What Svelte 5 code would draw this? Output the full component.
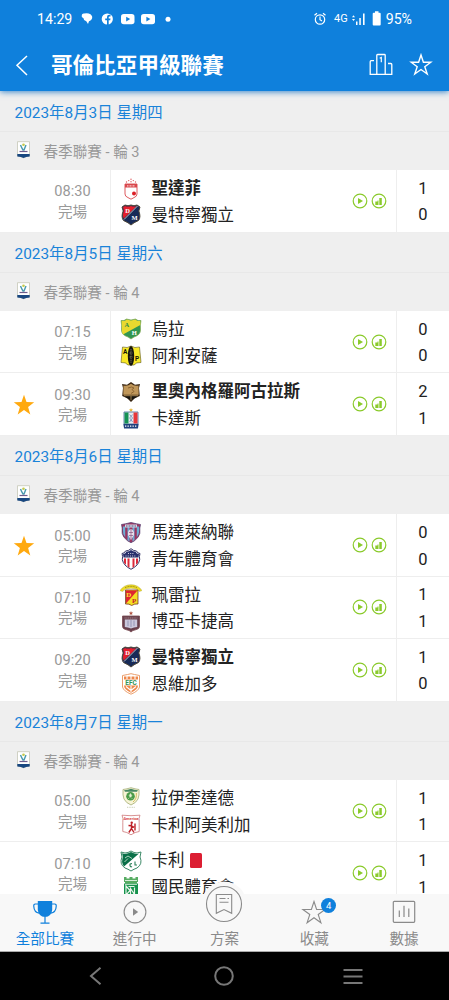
<script lang="ts">
	type Team = { name: string; crest: string; score: number; won?: boolean; red?: boolean };
	type Match = { time: string; fav?: boolean; teams: Team[] };

	const days: { date: string; round: number; matches: Match[] }[] = [
		{
			date: '2023年8月3日 星期四',
			round: 3,
			matches: [
				{
					time: '08:30',
					teams: [
						{ name: '聖達菲', crest: 'santafe', score: 1, won: true },
						{ name: '曼特寧獨立', crest: 'dim', score: 0 }
					]
				}
			]
		},
		{
			date: '2023年8月5日 星期六',
			round: 4,
			matches: [
				{
					time: '07:15',
					teams: [
						{ name: '烏拉', crest: 'huila', score: 0 },
						{ name: '阿利安薩', crest: 'alianza', score: 0 }
					]
				},
				{
					time: '09:30',
					fav: true,
					teams: [
						{ name: '里奧內格羅阿古拉斯', crest: 'aguilas', score: 2, won: true },
						{ name: '卡達斯', crest: 'caldas', score: 1 }
					]
				}
			]
		},
		{
			date: '2023年8月6日 星期日',
			round: 4,
			matches: [
				{
					time: '05:00',
					fav: true,
					teams: [
						{ name: '馬達萊納聯', crest: 'magdalena', score: 0 },
						{ name: '青年體育會', crest: 'junior', score: 0 }
					]
				},
				{
					time: '07:10',
					teams: [
						{ name: '珮雷拉', crest: 'pereira', score: 1 },
						{ name: '博亞卡捷高', crest: 'boyaca', score: 1 }
					]
				},
				{
					time: '09:20',
					teams: [
						{ name: '曼特寧獨立', crest: 'dim', score: 1, won: true },
						{ name: '恩維加多', crest: 'envigado', score: 0 }
					]
				}
			]
		},
		{
			date: '2023年8月7日 星期一',
			round: 4,
			matches: [
				{
					time: '05:00',
					teams: [
						{ name: '拉伊奎達德', crest: 'equidad', score: 1 },
						{ name: '卡利阿美利加', crest: 'america', score: 1 }
					]
				},
				{
					time: '07:10',
					teams: [
						{ name: '卡利', crest: 'cali', score: 1, red: true },
						{ name: '國民體育會', crest: 'nacional', score: 1 }
					]
				}
			]
		}
	];

	const tabs = [
		{ id: 'all', label: '全部比賽' },
		{ id: 'live', label: '進行中' },
		{ id: 'tips', label: '方案' },
		{ id: 'saved', label: '收藏' },
		{ id: 'stats', label: '數據' }
	];
	let active = $state('all');
</script>

{#snippet crest(id: string)}
	<svg viewBox="0 0 22 22" width="22" height="22">
		{#if id === 'santafe'}
			<g fill="#df5a5e">
				<circle cx="11" cy="1.2" r=".7" /><circle cx="8.7" cy="2.6" r=".7" /><circle cx="13.3" cy="2.6" r=".7" />
				<circle cx="6.5" cy="4" r=".7" /><circle cx="11" cy="3.8" r=".7" /><circle cx="15.5" cy="4" r=".7" />
			</g>
			<path d="M5 6h12v10q0 2.5-3 3.6l-3 1.6-3-1.6q-3-1.1-3-3.6z" fill="#fff" stroke="#d9474c" stroke-width=".9" />
			<path d="M5 6h12v3.5H5z" fill="#d9474c" />
			<path d="M7 7.8h8" stroke="#f6c8c8" stroke-width="1.2" stroke-dasharray="1 .5" />
			<circle cx="14" cy="15.6" r="2" fill="#dc1f26" />
		{:else if id === 'dim'}
			<path d="M2 3l3-2q3 1.5 6 0 3 1.5 6 0l3 2-1.2 4q2.4 6-.3 9.5l-4.5 2.3L11 21l-3-2.2-4.5-2.3Q.8 13 3.2 7z" fill="#172a57" stroke="#4b4437" stroke-width="1" />
			<path d="M3 3.3l2-1.4q3 1.3 6 0 3 1.3 5.7.1L3.7 14.500Q2 11 4 7z" fill="#e5202d" />
			<path d="M17.5 2L4 15.5" stroke="#e9e3d6" stroke-width=".8" />
			<text x="5.2" y="8.6" class="serif" font-size="6.5" fill="#fff">D</text>
			<text x="11.5" y="16" class="serif" font-size="6.5" fill="#fff">M</text>
		{:else if id === 'huila'}
			<path d="M1 2.5h3L6.5 1 11 2l4.5-1L18 2.5h3Q20 7 20.5 12q0 5-6.500 7l-3 2-3-2Q1.500 17 1.500 12 2 7 1 2.500z" fill="#319651" stroke="#81a852" stroke-width=".7" />
			<path d="M1.6 3h3l2-1.4L11 2.600l4.400-1L17.600 3h2.700v4L3 16.500Q1.500 14 2 10z" fill="#e9d92f" />
			<text x="4.5" y="8.8" class="serif" font-size="6.5" fill="#2f8c49">A</text>
			<text x="11.8" y="17" class="serif" font-size="6.5" fill="#fff">H</text>
		{:else if id === 'alianza'}
			<path d="M2.5 2q5 1.5 8.5-1 3.5 2.5 8.5 1l1.5 15.5q-5-.5-7 2.5H8q-2-3-7-2.5z" fill="#f8e827" stroke="#5c551a" stroke-width=".6" />
			<ellipse cx="11" cy="11" rx="3.2" ry="10" fill="#16150f" />
			<path d="M11 4v14M9.5 8h3M9.5 12h3" stroke="#8c8872" stroke-width=".8" stroke-dasharray="1.5 .7" />
			<text x="3" y="8.5" font-size="6.5" font-weight="700" fill="#171505">A</text>
			<text x="15" y="16" font-size="6.5" font-weight="700" fill="#171505">P</text>
		{:else if id === 'aguilas'}
			<path d="M2 3l5 .8L11 1l4 2.800L20 3l-1 4 .8 8-5.300 2.500L11 21l-3.500-3.500L2.200 15 3 7z" fill="#3d2915" />
			<path d="M3.5 4.5q4.5.8 7.5-1.7 3 2.5 7.5 1.7l.2 9.300H3.300z" fill="#c0975a" />
			<path d="M8 7q4-2 6 0l-2 1.500 2 2-3 2" fill="none" stroke="#8c6432" stroke-width="1" />
			<path d="M4 15l7-1 7 1-7 4.500z" fill="#171510" />
			<path d="M4 14.700h14M11 15v4" stroke="#c29a59" stroke-width=".8" />
		{:else if id === 'caldas'}
			<path d="M11 0l.6 1.300 1.400.1-1 1 .3 1.400-1.300-.7-1.300.7.3-1.400-1-1 1.400-.1z" fill="#e8b93b" />
			<path d="M4 4h14v12H4z" fill="#e8ecf1" stroke="#42649a" stroke-width=".8" />
			<path d="M4.5 4.5h4v11h-4z" fill="#159255" /><path d="M13.5 4.5h4v11h-4z" fill="#e8373a" />
			<path d="M9.600 6.500q3 2 0 3.500 3 1.500 0 4m3-7.500q-3 2 0 3.500-3 1.500 0 4" stroke="#577ba9" fill="none" stroke-width=".7" />
			<path d="M3.300 16h15.400l-.8 4.500H4.100z" fill="#21427d" />
			<path d="M5 18.200h12" stroke="#fff" stroke-width="1.2" stroke-dasharray="1.3 1.2" />
		{:else if id === 'magdalena'}
			<path d="M1.500 2.500l4-.7L11 .5l5.500 1.300 4 .7-.7 3.500q1 6-2 9.500-2.800 3.500-6.800 5.200-4-1.700-6.800-5.200Q1.200 12 2.200 6z" fill="#9d3560" stroke="#594373" stroke-width=".8" />
			<path d="M3 4.500h2.200v10.800Q2.500 12 3 9zM16.800 4.500H19q1 7-2.200 10.800zM7.500 4.500h2v15l-2-1.500zM12.500 4.500h2V18l-2 1.500z" fill="#6caed5" />
			<path d="M5 2.500h12v3H5z" fill="#d5d5e5" /><path d="M6 4h10" stroke="#4e557e" stroke-dasharray="1 .5" />
			<path d="M11 7q3.500 1 3 6l-3 5-3-5q-.5-5 3-6z" fill="#e8dfeb" /><path d="M9 10.500h4M11 7v10M9 13.500h4" stroke="#8d5580" stroke-width=".7" fill="none" />
		{:else if id === 'junior'}
			<path d="M2 5.500q2.500 0 3.500-2.500 3 0 5.500-2.300Q13.500 3 16.500 3q1 2.500 3.500 2.500-1 3-.3 6-1 6-8.700 9.800Q3.300 17.500 2.300 11.500 3 8.500 2 5.500z" fill="#fff" stroke="#343467" stroke-width="1" />
			<path d="M4 10.500v4.200l2 2v-6.200zM7.500 10.500v8l2 1.200v-9.200zM12.500 10.500v9.200l2-1.200v-8zM16 10.500v6.200l2-2v-4.200z" fill="#db2a3b" />
			<path d="M3 6q2.500 0 3.300-2.200Q9 3.600 11 1.900q2 1.700 4.700 1.900Q16.500 6 19 6l-.5 3.500h-15z" fill="#29306d" />
			<path d="M5.500 8h11M8 5.500h6" stroke="#fff" stroke-width=".8" stroke-dasharray="1 1.2" />
		{:else if id === 'pereira'}
			<path d="M0 6.500Q4 .7 11 .7t11 5.800l-2.500 1Q17 4.200 11 4.200T2.500 7.500z" fill="#f0dc25" stroke="#a39b2d" stroke-width=".4" />
			<path d="M5 3.700Q11 1 17 3.700" stroke="#766c1a" stroke-width=".8" stroke-dasharray="1 .6" fill="none" />
			<path d="M5.500 6h12.500v14q-3.500-.5-6.300 1.500-2.700-2-6.200-1.500z" fill="#f4dd24" stroke="#64221b" stroke-width=".7" />
			<path d="M6 6.500h11.500L6 19.500z" fill="#df2430" />
			<text x="6.3" y="13" class="serif" font-size="7" fill="#fae632">D</text>
			<text x="12" y="19" class="serif" font-size="7" fill="#c4202b">P</text>
		{:else if id === 'boyaca'}
			<path d="M11 0l.6 1.400 1.600.1-1.200 1 .3 1.500-1.300-.8-1.300.8.3-1.500-1.200-1 1.600-.1z" fill="#b15342" />
			<path d="M2.500 5h17v10.500q0 2.500-4 3.300-3 .4-4.500 2.200-1.500-1.800-4.500-2.200-4-.8-4-3.300z" fill="#68404d" stroke="#794a51" stroke-width=".8" />
			<path d="M4.800 8.500h12.400v7.500q-3.200 0-6.200 1.500-3-1.500-6.200-1.500z" fill="#cbc8dc" />
			<path d="M8 9.500v5.500M11 9v7M14 9.500v5.500" stroke="#7f81a8" stroke-width=".7" />
			<path d="M4.500 7h13" stroke="#c3a5a5" stroke-width=".7" stroke-dasharray="1.2 .6" />
		{:else if id === 'envigado'}
			<path d="M2.500 2.500l5-1L11 .7l3.500.8 5 1v11.500q-1 4-8.500 7.200Q3.500 18 2.500 14z" fill="#fff" stroke="#e8945c" stroke-width=".9" />
			<path d="M4 3.500h14v3H4zM4 12.500h14q0 4-7 7.300-7-3.300-7-7.300z" fill="#ee8749" />
			<path d="M7 3v3M11 3v3.500M15 3v3M6 13.500l5 4 5-4M11 13v6" stroke="#fff" stroke-width="1.1" fill="none" />
			<text x="11" y="11.6" text-anchor="middle" font-size="6.5" font-weight="700" fill="#339457">EFC</text>
		{:else if id === 'equidad'}
			<path d="M3 2.500q4-.5 8-1.800 4 1.300 8 1.800.5 6-1 9.500-2 4-7 6-5-2-7-6-1.500-3.500-1-9.500z" fill="#f7f4d6" stroke="#a3ad75" stroke-width=".8" />
			<path d="M4 3.200q4-.3 7-1.500 3 1.200 7 1.500l-1 1.500H5z" fill="#488863" />
			<circle cx="10.5" cy="9.3" r="4.3" fill="#4a9b48" /><path d="M10.500 6.500l1.300 2-.8 1.500h-1l-.8-1.500zM8 12l1.500-1.500m3 1.500L11 10.500" fill="#e5efd2" stroke="#e5efd2" stroke-width=".5" />
			<path d="M13 15q4-3 3.300-9" stroke="#d2bd5d" fill="none" />
			<path d="M7 20.300h8" stroke="#bcc4a3" stroke-width=".8" stroke-dasharray="1 .7" />
		{:else if id === 'america'}
			<path d="M2 1.200q9 1 18 0-1.500 3-.8 7v9.300q-4 .4-8.200 3.300-4.200-2.900-8.200-3.300V8.200q.7-4-.8-7z" fill="#fff" stroke="#ce7779" stroke-width=".8" />
			<text x="11" y="6.2" text-anchor="middle" font-size="4" font-weight="700" fill="#d64549">America</text>
			<circle cx="11.7" cy="8.7" r="1.2" fill="#bd2128" />
			<path d="M11.500 10v4.500l2.500 4m-2.500-4l-2.700 4M8.500 11.500l3 .3 2.500 1.500M15 9.500v7" fill="none" stroke="#bd2128" stroke-width="1.4" />
		{:else if id === 'cali'}
			<path d="M1 2l4 1Q8 3 11 1q3 2 6 2l4-1-1 5q3 7-3 11-3 1-6 3-3-2-6-3-6-4-3-11z" fill="#fff" stroke="#3c8967" stroke-width="1" />
			<path d="M2 3.200l3 .7q3.500 0 6-1.800 2.500 1.800 6 1.800l2-.4L4 16.500Q.7 12 3 7z" fill="#0a7048" />
			<path d="M5 8l3-2 4 2.500M4.500 12L8 8.500" stroke="#c2e0cd" stroke-width=".9" fill="none" />
			<path d="M12 13.500q-2.500 0-2 2t2 1M15 11.500v3.500h2" stroke="#2b8159" stroke-width="1.1" fill="none" />
		{:else if id === 'nacional'}
			<path d="M4 1h2.500v1.500h3V1h3v1.500h3V1H18v5h-1v2H5V6H4z" fill="#57ac62" />
			<path d="M4 7.500h14V20q-4 0-7 2-3-2-7-2z" fill="#15924c" />
			<path d="M5 4.500h12M5 8.300h12" stroke="#d7edda" stroke-width="1" />
			<path d="M6 10l4 4.500L6 19zM8.500 10.500h6M10.500 18.500v-6l4 6v-7" stroke="#eaf5eb" stroke-width="1.2" fill="none" />
		{/if}
	</svg>
{/snippet}

{#snippet tabIcon(id: string)}
	{#if id === 'all'}
		<svg width="26" height="26" viewBox="0 0 26 26" fill="none" stroke="currentColor" stroke-width="1.2">
			<path d="M5.800 2h14.400v9q-.8 6.500-7.200 7-6.400-.5-7.200-7z" fill="currentColor" stroke="none" />
			<path d="M6 5H3.300Q1.500 5 1.800 7.500q.3 6 5.500 6.700M20 5h2.700q1.800 0 1.500 2.500-.3 6-5.500 6.700M13 18v6M8.500 24.200h9" />
		</svg>
	{:else if id === 'live'}
		<svg width="26" height="26" viewBox="0 0 26 26">
			<circle cx="13" cy="13" r="10.900" fill="none" stroke="currentColor" stroke-width="1.1" />
			<path d="M11 9.300l5.200 3.700-5.200 3.700z" fill="currentColor" />
		</svg>
	{:else if id === 'tips'}
		<svg width="46" height="46" viewBox="0 0 46 46" fill="none" stroke="currentColor" stroke-width="1.1">
			<circle cx="23" cy="23" r="22.500" fill="#f8f8f8" stroke="none" />
			<circle cx="23" cy="23" r="17.500" />
			<path d="M15.300 13.500h15.400v18.800L23 28.500l-7.700 3.800zM18.500 17.500h6M18.500 21.300h9M26.500 17.500h1.500" />
		</svg>
	{:else if id === 'saved'}
		<svg width="26" height="26" viewBox="0 0 26 26" fill="none" stroke="currentColor" stroke-width="1.1">
			<path d="M13 2.500l2.600 8h8.500l-6.900 5 2.700 8.200L13 18.700l-6.900 5 2.700-8.200-6.900-5h8.500z" />
		</svg>
	{:else}
		<svg width="26" height="26" viewBox="0 0 26 26" fill="none" stroke="currentColor" stroke-width="1.2">
			<rect x="2.300" y="2.300" width="21.400" height="21" rx="1" />
			<path d="M8.300 11.500v6.500M13 6.800V18M17.800 9.500V18" />
		</svg>
	{/if}
{/snippet}

<div class="phone">
	<header>
		<div class="status">
			<span class="clock">14:29</span>
			<svg width="100" height="16" viewBox="0 0 100 16" fill="#fff">
				<path d="M.8 4Q1 2.300 3 2.500 7 1.500 9.500 3.300q2.700 2.200 1.200 5-1 1.700-2.700 2L7 13l-1.700-2.700Q2.500 9.700 2.500 7.200L.8 6z" />
				<circle cx="26.300" cy="8" r="5.600" />
				<path d="M26 14V9.200h-1.800V7.400H26V6q0-2.200 2.200-2.200h1.300v1.700h-1q-.8 0-.8.800v1.100h1.800l-.3 1.800h-1.500V14z" fill="#0f80dc" />
				<rect x="40" y="3" width="13.500" height="10.300" rx="2.800" /><path d="M45.200 5.800l4 2.300-4 2.300z" fill="#0f80dc" />
				<rect x="60" y="3" width="14" height="10.300" rx="2.800" /><path d="M65.400 5.800l4 2.300-4 2.300z" fill="#0f80dc" />
				<circle cx="87" cy="8.200" r="2.500" />
			</svg>
			<span class="fill"></span>
			<svg width="12" height="14" viewBox="0 0 12 14" fill="none" stroke="#fff" stroke-width="1.2">
				<circle cx="6" cy="7.500" r="4.700" /><path d="M6 4.500v3.200l2 1.200M.5 3.300L3 1.200M11.500 3.300L9 1.200" />
			</svg>
			<span class="net">4G</span>
			<svg width="13" height="14" viewBox="0 0 13 14" fill="#fff">
				<path d="M0 5.200l1.500-2 1.500 2zM0 7h3L1.500 9zM4 9.500h1.500V13H4zM7.300 6h1.500v7H7.300zM11 1.500h1.600V13H11z" />
			</svg>
			<svg class="battery" width="10" height="15" viewBox="0 0 10 15" fill="#fff">
				<path d="M3 .3h3.500v1.500h1.200q1 0 1 1v10.700q0 1-1 1h-6q-1 0-1-1V2.800q0-1 1-1H3z" />
			</svg>
			<span>95%</span>
		</div>
		<div class="bar">
			<svg width="14" height="24" viewBox="0 0 14 24" fill="none" stroke="#fff" stroke-width="1.5"><path d="M12 3L2 12.300 12 22" /></svg>
			<h1>哥倫比亞甲級聯賽</h1>
			<svg width="24" height="24" viewBox="0 0 24 24" fill="none" stroke="#fff" stroke-width="1.3">
				<path d="M7.800 21.300V2.300Q7.800 1.500 8.600 1.500h6.800q.8 0 .8.800v19M5 7.700H2.200q-1 0-1 1v12.600h21.600V11.500q0-1-1-1H19" />
				<path d="M10.700 5.300l1.600-.8v4.700" stroke-width="1.2" />
			</svg>
			<svg class="star" width="24" height="24" viewBox="0 0 24 24" fill="none" stroke="#fff" stroke-width="1.4">
				<path d="M12 2l2.400 7.200h7.400l-6 4.600 2.400 7.200-6.200-4.500-6.200 4.500 2.400-7.200-6-4.600h7.400z" />
			</svg>
		</div>
	</header>

	<main>
		{#each days as day (day.date)}
			<section>
				<h2>{day.date}</h2>
				<div class="league">
					<svg width="15" height="18" viewBox="0 0 15 18">
						<path d="M1.500.7h12V15q-3.500.3-6 1.800Q5 15.300 1.500 15z" fill="#fff" stroke="#c5c6b6" stroke-width=".8" />
						<path d="M4.500 4q1.200 3 2.500 5h1l2-5" fill="none" stroke="#4899ae" stroke-width="1.4" />
						<circle cx="7.500" cy="3.800" r="1.300" fill="#c3ca4b" />
						<path d="M3.500 10.500h8" stroke="#6d5c8c" stroke-width="1.2" />
						<path d="M1.300 13h12.400v2.500q-4 0-6.200 1.500-2.200-1.500-6.200-1.500z" fill="#184780" />
					</svg>
					<span>春季聯賽 - 輪 {day.round}</span>
				</div>
				{#each day.matches as match}
					<div class="match">
						<div class="fav">
							{#if match.fav}
								<svg width="22" height="22" viewBox="0 0 22 22"><path d="M11 .8l2.500 7.300 7.700.2-6.100 4.700 2.200 7.500-6.300-4.400-6.300 4.400 2.200-7.500L.8 8.300l7.700-.2z" fill="#ffa90f" /></svg>
							{/if}
						</div>
						<div class="when"><span>{match.time}</span><span>完場</span></div>
						<div class="teams">
							{#each match.teams as team}
								<div class="team" class:won={team.won}>
									{@render crest(team.crest)}
									<span>{team.name}</span>
									{#if team.red}<i class="card"></i>{/if}
								</div>
							{/each}
						</div>
						<div class="media">
							<svg width="16" height="16" viewBox="0 0 16 16"><circle cx="8" cy="8" r="6.800" fill="none" stroke="#8aca2b" stroke-width="1.2" /><path d="M6 5l5 3-5 3z" fill="#8aca2b" /></svg>
							<svg width="16" height="16" viewBox="0 0 16 16"><circle cx="8" cy="8" r="6.800" fill="none" stroke="#8aca2b" stroke-width="1.2" /><path d="M4.300 8.500h2.200V12H4.300zM6.500 7.500h1v4.500h-1zM8.300 5h2.500v7H8.300z" fill="#8aca2b" /></svg>
						</div>
						<div class="scores">
							{#each match.teams as team}<span>{team.score}</span>{/each}
						</div>
					</div>
				{/each}
			</section>
		{/each}
	</main>

	<nav>
		{#each tabs as tab (tab.id)}
			<button class:active={active === tab.id} onclick={() => (active = tab.id)}>
				<span class="icon {tab.id}">
					{@render tabIcon(tab.id)}
					{#if tab.id === 'saved'}<b>4</b>{/if}
				</span>
				<span>{tab.label}</span>
			</button>
		{/each}
	</nav>

	<footer>
		<svg width="20" height="24" viewBox="0 0 20 24"><path d="M14.500 3.800L5 12l9.500 8.200" /></svg>
		<svg width="24" height="24" viewBox="0 0 24 24"><circle cx="12" cy="12" r="8.800" /></svg>
		<svg width="24" height="24" viewBox="0 0 24 24"><path d="M2.500 6h19M2.500 12.500h19M2.500 19h19" /></svg>
	</footer>
</div>

<style>
	:global(body) {
		background: #000;
	}
	.phone {
		width: 449px;
		height: 1000px;
		display: flex;
		flex-direction: column;
		overflow: hidden;
		font-family: Roboto, 'Noto Sans CJK TC', sans-serif;
		background: #efefef;
	}
	svg {
		display: block;
		flex: none;
	}
	header {
		height: 91px;
		flex: none;
		background: #0f80dc;
		color: #fff;
		box-shadow: 0 1px 6px rgba(15, 110, 195, 0.8);
		z-index: 1;
	}
	.status {
		display: flex;
		align-items: center;
		height: 37px;
		padding: 0 37px;
		font-size: 14.2px;
	}
	.clock {
		width: 44px;
	}
	.fill {
		flex: 1;
	}
	.net {
		font-size: 11px;
		margin: 0 4px 0 8px;
	}
	.battery {
		margin: 0 4px 0 7px;
	}
	.bar {
		display: flex;
		align-items: center;
		height: 56px;
		padding: 0 16px 0 15px;
	}
	h1 {
		flex: 1;
		margin: 0 0 0 22px;
		padding-top: 1px;
		font-size: 21.6px;
		line-height: 30px;
		font-weight: 700;
	}
	.star {
		margin-left: 16px;
	}
	main {
		flex: 1;
		min-height: 0;
		padding-top: 0.7px;
		overflow: hidden;
	}
	h2 {
		height: 40.5px;
		box-sizing: border-box;
		margin: 0;
		padding-left: 14.5px;
		border-bottom: 1px solid #e8e8e8;
		color: #1a83d9;
		font-size: 15.4px;
		font-weight: 400;
		line-height: 42px;
	}
	.league {
		display: flex;
		align-items: center;
		gap: 13px;
		height: 38px;
		box-sizing: border-box;
		padding: 0 0 2px 15.5px;
		color: #999;
		font-size: 14.6px;
	}
	.match {
		display: grid;
		grid-template-columns: 35px 76px 1fr 45px 53px;
		height: 62.4px;
		box-sizing: border-box;
		background: #fff;
		border-bottom: 1px solid #eee;
	}
	.fav {
		display: flex;
		align-items: center;
		padding: 1px 0 0 13px;
	}
	.when {
		display: flex;
		flex-direction: column;
		justify-content: center;
		align-items: center;
		padding-top: 2px;
		border-right: 1px solid #eee;
		color: #999;
		font-size: 14.6px;
		line-height: 20.5px;
	}
	.teams,
	.scores {
		display: flex;
		flex-direction: column;
		padding-top: 5px;
		color: #222;
		font-size: 16.5px;
		line-height: 26.7px;
	}
	.teams {
		padding-left: 9px;
	}
	.team {
		display: flex;
		align-items: center;
		height: 26.7px;
		white-space: nowrap;
	}
	.team span {
		margin-left: 9.5px;
		padding-top: 2px;
	}
	.won {
		font-weight: 700;
	}
	.card {
		width: 12.5px;
		height: 15px;
		margin-left: 5px;
		border-radius: 1.5px;
		background: #dc1e32;
	}
	.serif {
		font-family: 'Liberation Serif', serif;
		font-weight: 700;
	}
	.media {
		display: flex;
		align-items: center;
		gap: 3.6px;
		padding-left: 0.7px;
	}
	.scores {
		align-items: center;
		padding-top: 5.5px;
		border-left: 1px solid #eee;
	}
	nav {
		position: relative;
		z-index: 1;
		display: grid;
		grid-template-columns: repeat(5, 1fr);
		height: 58px;
		flex: none;
		background: #f8f8f8;
		border-bottom: 1px solid #aaa;
		box-sizing: border-box;
	}
	button {
		display: flex;
		flex-direction: column;
		align-items: center;
		justify-content: flex-end;
		padding: 0 0 1px;
		border: 0;
		background: none;
		color: #8a8a8a;
		font: inherit;
		font-size: 14.6px;
		line-height: 22px;
	}
	button.active {
		color: #0f80dc;
	}
	.icon {
		position: relative;
		margin-bottom: 3px;
	}
	.icon.tips {
		margin: -20px 0 1px;
	}
	.icon b {
		position: absolute;
		top: -1px;
		right: -9px;
		width: 15px;
		height: 15px;
		border-radius: 50%;
		background: #0f80dc;
		color: #fff;
		font-size: 9.5px;
		font-weight: 400;
		line-height: 15px;
		text-align: center;
	}
	footer {
		display: flex;
		align-items: center;
		justify-content: space-between;
		height: 48px;
		flex: none;
		padding: 0 84px 0 86px;
		background: #000;
		fill: none;
		stroke: #777;
		stroke-width: 2;
	}
</style>
